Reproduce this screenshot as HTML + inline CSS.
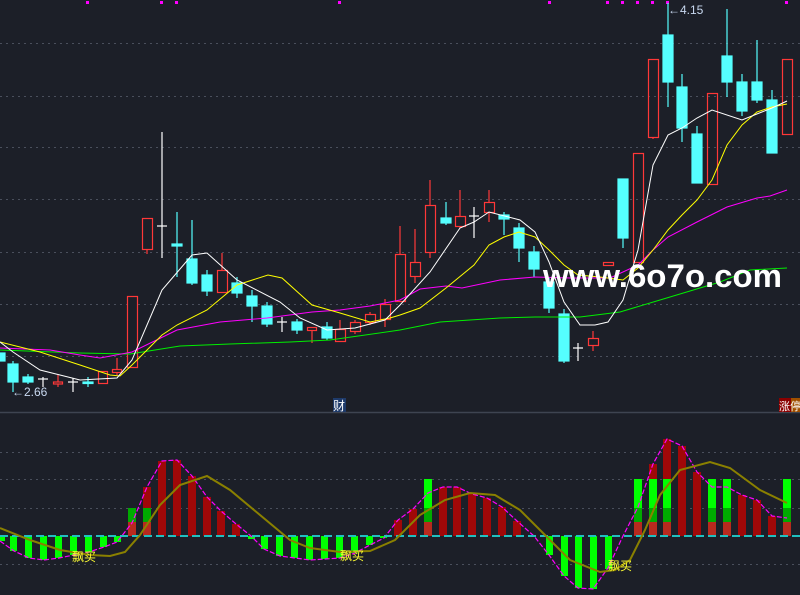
<!DOCTYPE html>
<html><head><meta charset="utf-8"><style>
html,body{margin:0;padding:0;background:#1c1f28;}
svg{display:block;}
</style></head><body>
<svg width="800" height="595" viewBox="0 0 800 595" xmlns="http://www.w3.org/2000/svg">
<rect width="800" height="595" fill="#1c1f28"/>
<g stroke="#4a4f5c" stroke-width="1" stroke-dasharray="2,4">
<line x1="0" y1="43.5" x2="800" y2="43.5"/><line x1="0" y1="96.5" x2="800" y2="96.5"/>
<line x1="0" y1="147.5" x2="800" y2="147.5"/><line x1="0" y1="199.5" x2="800" y2="199.5"/>
<line x1="0" y1="252.5" x2="800" y2="252.5"/><line x1="0" y1="304.5" x2="800" y2="304.5"/>
<line x1="0" y1="356.5" x2="800" y2="356.5"/>
<line x1="0" y1="452.5" x2="800" y2="452.5"/><line x1="0" y1="479.5" x2="800" y2="479.5"/>
<line x1="0" y1="508.5" x2="800" y2="508.5"/><line x1="0" y1="564.5" x2="800" y2="564.5"/>
</g>
<line x1="0" y1="412.5" x2="800" y2="412.5" stroke="#3e4451" stroke-width="1.5"/>
<g fill="#ff00ff">
<rect x="86" y="1" width="3" height="3"/><rect x="160" y="1" width="3" height="3"/><rect x="175" y="1" width="3" height="3"/><rect x="338" y="1" width="3" height="3"/><rect x="548" y="1" width="3" height="3"/><rect x="606" y="1" width="3" height="3"/><rect x="621" y="1" width="3" height="3"/><rect x="636" y="1" width="3" height="3"/><rect x="651" y="1" width="3" height="3"/><rect x="666" y="1" width="3" height="3"/><rect x="785" y="1" width="3" height="3"/>
</g>
<g id="candles" stroke-width="1.2">
<g fill="#55ffff" stroke="#55ffff">
<rect x="-5" y="353" width="10" height="8"/>
<line x1="13" y1="361" x2="13" y2="392"/><rect x="8" y="364" width="10" height="18"/>
<line x1="28" y1="374" x2="28" y2="384"/><rect x="23" y="377" width="10" height="5"/>
<line x1="88" y1="377" x2="88" y2="387"/><rect x="83" y="382" width="10" height="1.5"/>
<line x1="177" y1="212" x2="177" y2="277"/><rect x="172" y="244" width="10" height="2"/>
<line x1="192" y1="220" x2="192" y2="285"/><rect x="187" y="259" width="10" height="24"/>
<line x1="207" y1="270" x2="207" y2="296"/><rect x="202" y="275" width="10" height="16"/>
<line x1="237" y1="277" x2="237" y2="298"/><rect x="232" y="283" width="10" height="10"/>
<line x1="252" y1="290" x2="252" y2="322"/><rect x="247" y="296" width="10" height="10"/>
<line x1="267" y1="302" x2="267" y2="327"/><rect x="262" y="306" width="10" height="18"/>
<line x1="297" y1="319" x2="297" y2="334"/><rect x="292" y="322" width="10" height="8"/>
<line x1="327" y1="322" x2="327" y2="340"/><rect x="322" y="327" width="10" height="11"/>
<line x1="446" y1="202" x2="446" y2="225"/><rect x="441" y="218" width="10" height="5"/>
<line x1="504" y1="212" x2="504" y2="235"/><rect x="499" y="215" width="10" height="4"/>
<line x1="519" y1="223" x2="519" y2="262"/><rect x="514" y="228" width="10" height="20"/>
<line x1="534" y1="246" x2="534" y2="277"/><rect x="529" y="252" width="10" height="17"/>
<line x1="549" y1="278" x2="549" y2="313"/><rect x="544" y="282" width="10" height="26"/>
<line x1="564" y1="309" x2="564" y2="363"/><rect x="559" y="314" width="10" height="47"/>
<line x1="623" y1="179" x2="623" y2="248"/><rect x="618" y="179" width="10" height="59"/>
<line x1="668" y1="3" x2="668" y2="107"/><rect x="663" y="35" width="10" height="47"/>
<line x1="682" y1="74" x2="682" y2="142"/><rect x="677" y="87" width="10" height="41"/>
<line x1="697" y1="126" x2="697" y2="183"/><rect x="692" y="134" width="10" height="49"/>
<line x1="727" y1="9" x2="727" y2="97"/><rect x="722" y="56" width="10" height="26"/>
<line x1="742" y1="74" x2="742" y2="116"/><rect x="737" y="82" width="10" height="29"/>
<line x1="757" y1="40" x2="757" y2="103"/><rect x="752" y="82" width="10" height="18"/>
<line x1="772" y1="90" x2="772" y2="153"/><rect x="767" y="100" width="10" height="53"/>
</g>
<g fill="none" stroke="#ff3838">
<line x1="58" y1="375" x2="58" y2="387"/><rect x="53.5" y="382" width="9" height="2" fill="#1c1f28"/>
<rect x="98.5" y="371.5" width="9" height="12" fill="#1c1f28"/>
<line x1="117" y1="358" x2="117" y2="375"/><rect x="112.5" y="369.5" width="9" height="3" fill="#1c1f28"/>
<rect x="127.5" y="296.5" width="10" height="71" fill="#1c1f28"/>
<line x1="147" y1="249" x2="147" y2="254"/><rect x="142.5" y="218.5" width="10" height="31"/>
<line x1="222" y1="253" x2="222" y2="293"/><rect x="217.5" y="270.5" width="10" height="22" fill="#1c1f28"/>
<line x1="312" y1="330" x2="312" y2="343"/><rect x="307.5" y="327.5" width="9" height="3" fill="#1c1f28"/>
<line x1="340" y1="320" x2="340" y2="329"/><rect x="335.5" y="329.5" width="10" height="12" fill="#1c1f28"/>
<line x1="355" y1="320" x2="355" y2="334"/><rect x="350.5" y="322.5" width="10" height="9" fill="#1c1f28"/>
<line x1="370" y1="312" x2="370" y2="325"/><rect x="365.5" y="314.5" width="10" height="8" fill="#1c1f28"/>
<line x1="385" y1="299" x2="385" y2="327"/><rect x="380.5" y="304.5" width="10" height="15" fill="#1c1f28"/>
<line x1="400" y1="226" x2="400" y2="254"/><rect x="395.5" y="254.5" width="10" height="47" fill="#1c1f28"/>
<line x1="415" y1="229" x2="415" y2="283"/><rect x="410.5" y="262.5" width="10" height="14" fill="#1c1f28"/>
<line x1="430" y1="180" x2="430" y2="258"/><rect x="425.5" y="205.5" width="10" height="47" fill="#1c1f28"/>
<line x1="460" y1="190" x2="460" y2="228"/><rect x="455.5" y="216.5" width="10" height="10" fill="#1c1f28"/>
<line x1="489" y1="190" x2="489" y2="222"/><rect x="484.5" y="202.5" width="10" height="10" fill="#1c1f28"/>
<line x1="593" y1="331" x2="593" y2="351"/><rect x="588.5" y="338.5" width="10" height="7" fill="#1c1f28"/>
<rect x="603.5" y="262.5" width="10" height="3"/>
<rect x="633.5" y="153.5" width="10" height="109"/>
<line x1="653" y1="137" x2="653" y2="139"/><rect x="648.5" y="59.5" width="10" height="78"/>
<rect x="707.5" y="93.5" width="10" height="91"/>
<rect x="782.5" y="59.5" width="10" height="75"/>
</g>
<g stroke="#ffffff">
<line x1="43" y1="377" x2="43" y2="387"/><line x1="38" y1="379" x2="48" y2="379"/>
<line x1="73" y1="378" x2="73" y2="392"/><line x1="68" y1="382" x2="78" y2="382"/>
<line x1="162" y1="132" x2="162" y2="258"/><line x1="157" y1="226" x2="167" y2="226"/>
<line x1="282" y1="317" x2="282" y2="332"/><line x1="277" y1="322" x2="287" y2="322"/>
<line x1="474" y1="207" x2="474" y2="238"/><line x1="469" y1="216" x2="479" y2="216"/>
<line x1="578" y1="343" x2="578" y2="361"/><line x1="573" y1="348" x2="583" y2="348"/>
</g>
</g>
<g fill="none" stroke-width="1">
<polyline stroke="#00ee00" points="0,350 80,353 130,354 180,346 230,344 290,342 330,340 400,330 440,322 500,318 535,317 580,317 620,312 660,300 720,282 750,270 787,268"/>
<polyline stroke="#ff00ff" points="0,348 50,350 80,355 100,358 132,352 177,330 220,322 267,318 312,312 340,310 370,306 400,300 420,289 446,286 462,288 500,280 535,277 570,278 610,278 638,265 653,250 668,237 697,222 727,207 757,198 770,196 787,190"/>
<polyline stroke="#ffff00" points="0,342 40,352 80,365 110,375 120,376 132,365 162,335 177,325 207,310 237,285 268,275 282,278 312,305 340,313 370,322 390,318 400,315 420,308 446,288 474,265 489,245 504,237 519,232 535,237 549,250 564,265 578,275 600,277 623,280 638,268 653,250 668,230 682,215 697,200 712,180 727,145 742,125 757,112 772,107 787,104"/>
<polyline stroke="#ffffff" points="0,342 13,352 40,370 80,380 117,378 132,360 162,290 192,255 207,253 237,280 280,302 300,318 327,330 355,328 385,320 400,305 430,272 460,228 474,222 489,212 520,220 535,232 549,262 564,302 580,325 595,325 608,322 623,300 638,250 653,165 668,135 682,128 697,118 712,110 742,120 772,108 787,101"/>
</g>
<text x="12" y="396" font-family="Liberation Sans, sans-serif" font-size="12" fill="#c8d8f0">←2.66</text>
<text x="668" y="14" font-family="Liberation Sans, sans-serif" font-size="12" fill="#c8d8f0">←4.15</text>
<text x="543" y="287" font-family="Liberation Sans, sans-serif" font-size="32" font-weight="bold" fill="#ffffff" textLength="239" lengthAdjust="spacingAndGlyphs">www.6o7o.com</text>
<rect x="333" y="398" width="13" height="14" fill="#1e3a6a"/>
<text x="333" y="410" font-family="Liberation Sans, 'Noto Sans CJK SC', sans-serif" font-size="12" fill="#ffffff">财</text>
<rect x="779" y="398" width="12" height="14" fill="#8a0000"/><rect x="791" y="398" width="9" height="14" fill="#a05000"/>
<text x="779" y="410" font-family="Liberation Sans, 'Noto Sans CJK SC', sans-serif" font-size="11" fill="#ffffff">涨停</text>
<g fill="#00ff00">
<rect x="-2" y="536" width="7" height="5"/>
<rect x="10" y="536" width="7" height="15"/><rect x="25" y="536" width="7" height="22"/><rect x="40" y="536" width="7" height="24"/><rect x="55" y="536" width="7" height="22"/><rect x="70" y="536" width="7" height="19"/><rect x="85" y="536" width="7" height="16"/><rect x="100" y="536" width="7" height="11"/><rect x="114" y="536" width="7" height="6"/>
<rect x="248" y="536" width="7" height="3"/><rect x="261" y="536" width="7" height="13"/><rect x="276" y="536" width="7" height="20"/><rect x="291" y="536" width="7" height="22"/><rect x="306" y="536" width="7" height="24"/><rect x="321" y="536" width="7" height="23"/><rect x="336" y="536" width="7" height="22"/><rect x="351" y="536" width="7" height="17"/><rect x="366" y="536" width="7" height="9"/><rect x="380" y="536" width="7" height="2"/>
<rect x="546" y="536" width="7" height="19"/><rect x="561" y="536" width="7" height="40"/><rect x="575" y="536" width="7" height="52"/><rect x="590" y="536" width="7" height="53"/><rect x="605" y="536" width="7" height="33"/>
</g>
<g fill="#a00808">
<rect x="128" y="523" width="8" height="13"/><rect x="143" y="487" width="8" height="49"/><rect x="158" y="461" width="8" height="75"/><rect x="173" y="460" width="8" height="76"/><rect x="188" y="476" width="8" height="60"/><rect x="203" y="497" width="8" height="39"/><rect x="217" y="511" width="8" height="25"/><rect x="232" y="524" width="8" height="12"/>
<rect x="394" y="520" width="8" height="16"/><rect x="409" y="509" width="8" height="27"/><rect x="424" y="493" width="8" height="43"/><rect x="439" y="487" width="8" height="49"/><rect x="453" y="487" width="8" height="49"/><rect x="468" y="494" width="8" height="42"/><rect x="483" y="498" width="8" height="38"/><rect x="498" y="507" width="8" height="29"/><rect x="513" y="521" width="8" height="15"/>
<rect x="634" y="507" width="8" height="29"/><rect x="649" y="464" width="8" height="72"/><rect x="663" y="439" width="8" height="97"/><rect x="678" y="446" width="8" height="90"/><rect x="693" y="472" width="8" height="64"/><rect x="708" y="487" width="8" height="49"/><rect x="723" y="487" width="8" height="49"/><rect x="738" y="495" width="8" height="41"/><rect x="753" y="500" width="8" height="36"/><rect x="768" y="516" width="8" height="20"/><rect x="783" y="518" width="8" height="18"/>
</g>
<g>
<rect x="128" y="508" width="8" height="14" fill="#00aa00"/><rect x="143" y="508" width="8" height="14" fill="#00aa00"/>
<rect x="424" y="479" width="8" height="29" fill="#00ff00"/><rect x="424" y="508" width="8" height="14" fill="#00aa00"/>
<g fill="#00ff00"><rect x="634" y="479" width="8" height="29"/><rect x="649" y="479" width="8" height="29"/><rect x="663" y="479" width="8" height="29"/><rect x="708" y="479" width="8" height="29"/><rect x="723" y="479" width="8" height="29"/><rect x="783" y="479" width="8" height="29"/></g>
<g fill="#00aa00"><rect x="634" y="508" width="8" height="14"/><rect x="649" y="508" width="8" height="14"/><rect x="663" y="508" width="8" height="14"/><rect x="708" y="508" width="8" height="14"/><rect x="723" y="508" width="8" height="14"/><rect x="783" y="508" width="8" height="14"/></g>
<g fill="#b82a1e"><rect x="128" y="522" width="8" height="14"/><rect x="143" y="522" width="8" height="14"/><rect x="424" y="522" width="8" height="14"/><rect x="634" y="522" width="8" height="14"/><rect x="649" y="522" width="8" height="14"/><rect x="663" y="522" width="8" height="14"/><rect x="708" y="522" width="8" height="14"/><rect x="723" y="522" width="8" height="14"/><rect x="783" y="522" width="8" height="14"/></g>
</g>
<polyline fill="none" stroke="#ff00ff" stroke-width="1.2" stroke-dasharray="5,2" points="0,541 14,551 29,558 44,560 59,558 74,555 89,552 104,547 117,542 132,523 147,487 162,461 177,460 192,476 207,497 221,511 236,524 251,536 264,549 280,556 295,558 310,560 325,559 340,558 355,553 370,545 384,538 398,520 413,509 428,493 443,487 457,487 472,494 487,498 502,507 517,521 534,536 549,555 564,576 578,588 593,589 608,568 623,536 638,507 653,464 667,439 682,446 697,472 712,487 727,487 742,495 757,500 772,516 787,518"/>
<line x1="0" y1="536" x2="800" y2="536" stroke="#20c0c0" stroke-width="2" stroke-dasharray="8,4"/>
<polyline fill="none" stroke="#8a8000" stroke-width="2" points="0,528 30,540 60,550 90,555 110,556 125,552 140,535 160,505 180,485 207,476 230,490 260,515 290,540 310,548 340,552 370,551 395,540 420,515 445,500 470,493 495,495 520,510 545,535 570,560 600,572 615,570 630,560 645,530 660,495 680,470 710,462 730,468 760,490 787,503"/>
<g font-family="Liberation Sans, 'Noto Sans CJK SC', sans-serif" font-size="12" fill="#ffff33">
<text x="72" y="561">飘买</text><text x="340" y="560">飘买</text><text x="608" y="570">飘买</text>
</g>
</svg>
</body></html>
